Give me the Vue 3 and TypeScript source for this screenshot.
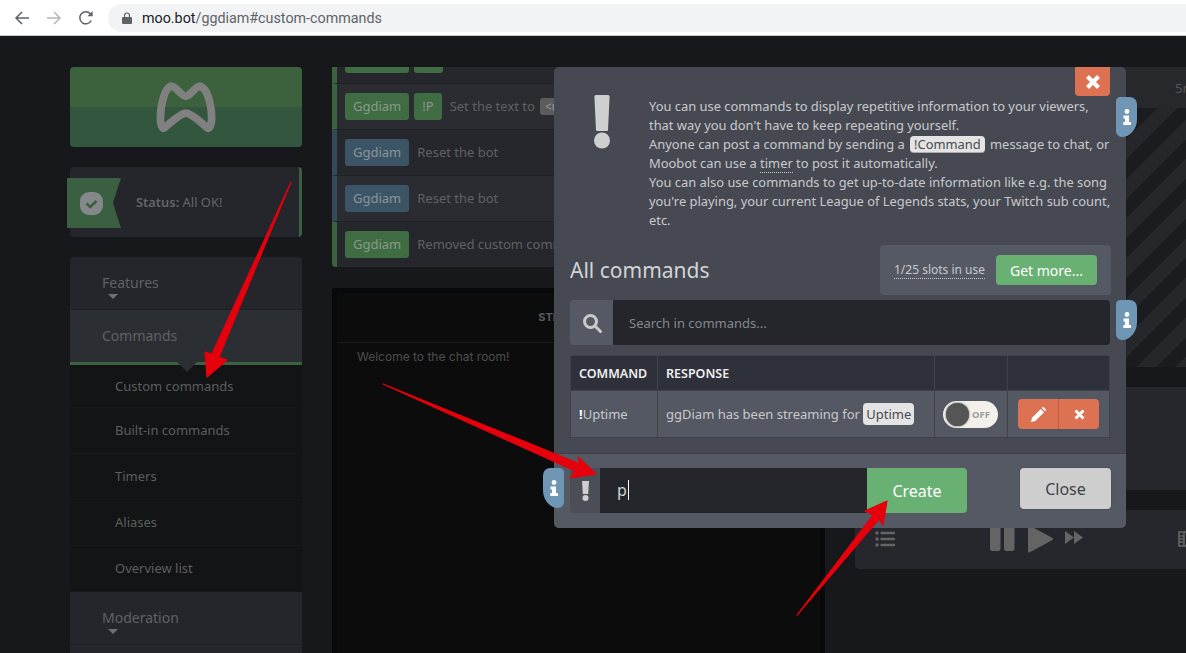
<template>
  <div class="app">
    <!-- Browser toolbar -->
    <header class="browser">
      <svg class="nav-icon back" width="16" height="16" viewBox="0 0 16 16" fill="none" stroke="#5f6368" stroke-width="1.5">
        <path d="M15 8H2M8 2 2 8l6 6" />
      </svg>
      <svg class="nav-icon forward" width="16" height="16" viewBox="0 0 16 16" fill="none" stroke="#b4b6b9" stroke-width="1.5">
        <path d="M1 8h13M8 2l6 6-6 6" />
      </svg>
      <svg class="nav-icon reload" width="16" height="16" viewBox="0 0 16 16" fill="none" stroke="#5f6368" stroke-width="1.5">
        <path d="M13.2 10.5A6 6 0 1 1 12.4 3.9L14 5.5" />
        <path d="M14.6 1v5.2H9.4" fill="#5f6368" stroke="none" />
      </svg>
      <div class="url-pill">
        <svg width="10" height="12" viewBox="0 0 10 12" fill="#5f6368">
          <path d="M1 5h8a1 1 0 0 1 1 1v5a1 1 0 0 1-1 1H1a1 1 0 0 1-1-1V6a1 1 0 0 1 1-1z" />
          <path d="M2.5 5V3.5a2.5 2.5 0 0 1 5 0V5" fill="none" stroke="#5f6368" stroke-width="1.2" />
        </svg>
        <span class="url"><b>moo.bot</b>/ggdiam#custom-commands</span>
      </div>
    </header>

    <div class="page">
      <!-- Left column -->
      <aside class="sidebar">
        <div class="logo">
          <svg width="62" height="54" viewBox="465 240 185 160" fill="none" stroke="#808080" stroke-width="23" stroke-linejoin="round">
            <path d="M481 355C481 310 495 264 512 258 525 256 545 288 557 288 570 288 587 256 600 258 620 264 634 310 634 355 634 370 628 386 622 383 610 373 575 338 557 338 540 338 505 373 492 383 486 386 481 370 481 355Z" />
          </svg>
        </div>
        <div class="status">
          <div class="ribbon">
            <svg width="23" height="23" viewBox="0 0 23 23">
              <rect width="23" height="23" rx="9" fill="#85888a" />
              <path d="M6.5 11.500l3.800 3.500 6.200-6" fill="none" stroke="#3a5f41" stroke-width="2.600" />
            </svg>
          </div>
          <span class="status-text"><b>Status:</b> All OK!</span>
        </div>
        <nav class="menu">
          <div class="menu-head">Features<i class="caret"></i></div>
          <div class="menu-head active">Commands</div>
          <div class="submenu">
            <div v-for="item in subItems" :key="item" class="sub-item">{{ item }}</div>
          </div>
          <div class="menu-head">Moderation<i class="caret"></i></div>
          <div class="menu-head"></div>
        </nav>
      </aside>

      <!-- Middle column -->
      <main class="middle">
        <section class="log">
          <div v-for="(row, i) in logRows" :key="i" class="log-row" :class="[row.kind, { clipped: i === 0 }]">
            <span class="badge">Ggdiam</span>
            <span v-if="row.cmd" class="badge">{{ row.cmd }}</span>
            <span class="log-text">{{ row.text }}</span>
            <span v-if="row.code" class="log-code">{{ row.code }}</span>
          </div>
        </section>
        <section class="chat">
          <div class="chat-head">STREAM CHAT</div>
          <div class="chat-body">Welcome to the chat room!</div>
        </section>
      </main>

      <!-- Right column -->
      <section class="right">
        <div class="right-top"><span>5m</span></div>
        <div class="stripes"></div>
        <div class="right-panel"></div>
        <div class="player">
          <svg class="p-list" width="20" height="16" viewBox="0 0 20 16" fill="#646464">
            <circle cx="2" cy="2" r="1.7" /><circle cx="2" cy="8" r="1.7" /><circle cx="2" cy="14" r="1.7" />
            <rect x="5.5" y="0.8" width="14.5" height="2.4" rx="0.6" /><rect x="5.5" y="6.8" width="14.5" height="2.4" rx="0.6" /><rect x="5.5" y="12.8" width="14.5" height="2.4" rx="0.6" />
          </svg>
          <svg class="p-pause" width="25" height="26" viewBox="0 0 25 26" fill="#646464">
            <rect width="10.5" height="26" rx="2.5" /><rect x="14" width="10.5" height="26" rx="2.5" />
          </svg>
          <svg class="p-play" width="25" height="28" viewBox="0 0 25 28" fill="#646464" stroke="#646464" stroke-width="2" stroke-linejoin="round">
            <path d="M1 1.5 24 14 1 26.5Z" />
          </svg>
          <svg class="p-ff" width="18" height="13" viewBox="0 0 18 13" fill="#646464">
            <path d="M0 0l9 6.5L0 13zM9 0l9 6.5L9 13z" />
          </svg>
          <svg class="p-film" width="16" height="16" viewBox="0 0 16 16" fill="none" stroke="#646464" stroke-width="1.6">
            <rect x="1" y="1" width="20" height="14" /><path d="M1 5h5M1 8h5M1 11h5M6 1v14" />
          </svg>
        </div>
      </section>
    </div>

    <!-- Commands dialog -->
    <div class="modal">
      <button class="modal-x" aria-label="Close">
        <svg width="16" height="16" viewBox="0 0 16 16"><path d="M2.5 2.5l11 11M13.500 2.500l-11 11" stroke="#fff" stroke-width="4.200" /></svg>
      </button>

      <div class="modal-body">
        <div class="intro">
          <svg class="bang" width="18" height="54" viewBox="0 0 18 54" fill="#cfcfcf">
            <path d="M3 0h12a1.6 1.6 0 0 1 1.6 1.6L15 35a1 1 0 0 1-1 1H4a1 1 0 0 1-1-1L1.400 1.600A1.600 1.600 0 0 1 3 0z" />
            <circle cx="9" cy="45.500" r="8" />
          </svg>
          <p class="intro-text">
            You can use commands to display repetitive information to your viewers,<br />
            that way you don't have to keep repeating yourself.<br />
            Anyone can post a command by sending a <span class="tag dotted">!Command</span> message to chat, or<br />
            Moobot can use a <span class="dotted-link">timer</span> to post it automatically.<br />
            You can also use commands to get up-to-date information like e.g. the song<br />
            you're playing, your current League of Legends stats, your Twitch sub count,<br />
            etc.
          </p>
        </div>

        <div class="title-row">
          <h2>All commands</h2>
          <div class="slots">
            <span class="slots-text">1/25 slots in use</span>
            <button class="get-more">Get more...</button>
          </div>
        </div>

        <div class="search">
          <div class="search-icon">
            <svg width="20" height="20" viewBox="0 0 20 20" fill="none" stroke="#c9cacc" stroke-width="3">
              <circle cx="8.500" cy="8.500" r="6" /><path d="M13 13l5.500 5.500" stroke-linecap="round" />
            </svg>
          </div>
          <input class="search-input" placeholder="Search in commands..." />
        </div>

        <table class="commands">
          <thead>
            <tr><th class="c1">COMMAND</th><th>RESPONSE</th><th class="c3"></th><th class="c4"></th></tr>
          </thead>
          <tbody>
            <tr>
              <td><b>!</b>Uptime</td>
              <td>ggDiam has been streaming for <span class="tag">Uptime</span></td>
              <td>
                <div class="toggle"><i class="knob"></i><span>OFF</span></div>
              </td>
              <td>
                <div class="row-actions">
                  <button>
                    <svg width="15" height="15" viewBox="0 0 15 15" fill="#fff">
                      <path d="M0 15l1-4.300L9.800 1.900l3.300 3.300L4.300 14zM10.800.900l.6-.6a1 1 0 0 1 1.400 0l1.900 1.900a1 1 0 0 1 0 1.400l-.6.6z" />
                    </svg>
                  </button>
                  <button>
                    <svg width="11" height="11" viewBox="0 0 11 11"><path d="M1.500 1.500l8 8M9.500 1.500l-8 8" stroke="#fff" stroke-width="2.800" /></svg>
                  </button>
                </div>
              </td>
            </tr>
          </tbody>
        </table>
      </div>

      <div class="modal-foot">
        <div class="new-command">
          <div class="new-bang">
            <svg width="9" height="20" viewBox="0 0 9 20" fill="#cfcfcf">
              <path d="M1 0h7l-.8 13H1.800z" /><circle cx="4.500" cy="17" r="3" />
            </svg>
          </div>
          <div class="new-input"><span class="typed">p</span></div>
          <button class="create">Create</button>
        </div>
        <button class="close-btn">Close</button>
      </div>

      <!-- Help tabs on the dialog edges -->
      <div v-for="tab in infoTabs" :key="tab.name" class="info-tab" :class="tab.name">
        <svg width="8" height="16" viewBox="0 0 8 16" fill="#fff">
          <circle cx="4" cy="2.500" r="2.400" />
          <path d="M.5 6.500h5.500v6.500H8V16H.3v-3H2V9.500H.5z" />
        </svg>
      </div>
    </div>

    <!-- Red annotation arrows -->
    <svg class="arrows" width="1186" height="653" viewBox="0 0 1186 653">
      <g fill="#e6000c" stroke="#e6000c" stroke-width="1.200" stroke-linejoin="round">
        <polygon points="291,182 219,357 227,360 207,377 205,352 212,354" />
        <polygon points="383,384 580,464 578,457 596,474 570,478 575,471" />
        <polygon points="797,615 873,515 865,511 887,501 883,525 879,519" />
      </g>
    </svg>
  </div>
</template>

<script setup lang="ts">
interface LogRow {
  kind: 'green' | 'blue'
  cmd?: string
  text: string
  code?: string
}

const subItems: string[] = ['Custom commands', 'Built-in commands', 'Timers', 'Aliases', 'Overview list']

const logRows: LogRow[] = [
  { kind: 'green', cmd: '!G', text: 'Changed the game' },
  { kind: 'green', cmd: '!P', text: 'Set the text to', code: '<uptime>' },
  { kind: 'blue', text: 'Reset the bot' },
  { kind: 'blue', text: 'Reset the bot' },
  { kind: 'green', text: 'Removed custom command' }
]

const infoTabs = [{ name: 'tab-top' }, { name: 'tab-search' }, { name: 'tab-new' }]
</script>

<style>
html,
body {
  margin: 0;
  overflow: hidden;
  background: #17181c;
}
</style>

<style scoped>
.app {
  position: relative;
  width: 1186px;
  height: 653px;
  overflow: hidden;
  background: #17181c;
  font-family: "Noto Sans", "Open Sans", sans-serif;
}

/* browser bar */
.browser {
  height: 35px;
  background: #fff;
  border-bottom: 1px solid #c9cacc;
  display: flex;
  align-items: center;
  padding-left: 14px;
  gap: 16px;
}

.url-pill {
  flex: 1;
  height: 28px;
  margin-left: -2px;
  padding-left: 14px;
  display: flex;
  align-items: center;
  gap: 10px;
  background: #f1f3f4;
  border-radius: 14px 0 0 14px;
}

.url {
  font-family: Roboto, "Liberation Sans", sans-serif;
  font-size: 14.3px;
  color: #5f6368;
}

.url b {
  font-weight: 400;
  color: #202124;
}

.page {
  display: flex;
  gap: 30px;
  padding: 31px 0 0 70px;
}

/* sidebar */
.sidebar {
  width: 232px;
  flex-shrink: 0;
}

.logo {
  height: 80px;
  border-radius: 4px;
  background: linear-gradient(#3c613d 0 50%, #33563f 50%);
  display: flex;
  align-items: center;
  justify-content: center;
}

.status {
  position: relative;
  height: 70px;
  margin-top: 20px;
  background: #24262b;
  border-right: 3px solid #3a5f41;
  border-radius: 4px;
  display: flex;
  align-items: center;
  box-sizing: border-box;
  padding-left: 66px;
}

.ribbon {
  position: absolute;
  left: -3px;
  top: 11px;
  width: 54px;
  height: 50px;
  background: #3a5f41;
  clip-path: polygon(0 0, 100% 0, 85% 50%, 100% 100%, 0 100%);
  display: flex;
  align-items: center;
  padding-left: 13px;
  box-sizing: border-box;
}

.status-text {
  font-size: 12.9px;
  color: #636569;
}

.status-text b {
  font-weight: 600;
}

.menu {
  margin-top: 20px;
  border-radius: 4px 4px 0 0;
  overflow: hidden;
  background: #24262b;
}

.menu-head {
  position: relative;
  height: 53px;
  box-sizing: border-box;
  padding: 17px 0 0 32px;
  font-size: 14px;
  line-height: 18px;
  color: #5f6166;
  border-bottom: 1px solid #1f2024;
}

.menu-head.active {
  height: 55px;
  background: #2b2e33;
  border-bottom: 3px solid #3b6340;
}

.menu-head.active::after {
  content: "";
  position: absolute;
  left: 107px;
  bottom: -10px;
  border: 10px solid transparent;
  border-bottom: 0;
  border-top-color: #2b2e33;
  z-index: 1;
}

.caret {
  position: absolute;
  left: 38px;
  top: 37px;
  border: 5px solid transparent;
  border-bottom: 0;
  border-top-color: #6c6e72;
}

.submenu {
  background: #131416;
}

.sub-item {
  height: 46px;
  box-sizing: border-box;
  padding: 13px 0 0 45px;
  font-size: 13px;
  line-height: 18px;
  color: #5d5e60;
  border-bottom: 1px solid #17181a;
}

.sub-item:first-child {
  height: 43px;
  padding-top: 12px;
}

/* middle column */
.middle {
  width: 493px;
  flex-shrink: 0;
}

.log {
  height: 200px;
  border-radius: 0 0 0 4px;
  overflow: hidden;
  background: #25272c;
}

.log-row {
  height: 46px;
  box-sizing: border-box;
  padding-left: 8px;
  display: flex;
  align-items: center;
  gap: 5px;
  overflow: hidden;
  border-left: 5px solid #3b6340;
  border-bottom: 1px solid #1f2125;
}

.log-row.clipped {
  height: 17px;
  align-items: flex-end;
  padding-bottom: 10px;
}

.log-row.clipped .log-text {
  margin-bottom: 7px;
}

.log-row:nth-child(even) {
  background: #2a2c31;
}

.log-row.blue {
  border-left-color: #334a5a;
}

.badge {
  flex-shrink: 0;
  height: 27px;
  padding: 0 8px;
  border-radius: 3px;
  background: #3f6c42;
  color: #8a9a8b;
  font-size: 13px;
  line-height: 27px;
}

.blue .badge {
  background: #3c5566;
  color: #8a949b;
}

.log-text {
  margin: 0 0 2px 3px;
  font-size: 13px;
  color: #5f6166;
  white-space: nowrap;
}

.log-code {
  margin-bottom: 1px;
  padding: 0 5px;
  border-radius: 3px;
  background: #5c5c5c;
  color: #9a9a9a;
  font-size: 12px;
  line-height: 17px;
}

.chat {
  height: 365px;
  margin-top: 21px;
  box-sizing: border-box;
  border: solid #08090a;
  border-width: 5px 5px 0;
  border-radius: 4px 4px 0 0;
  background: #0c0c0d;
}

.chat-head {
  height: 49px;
  border-bottom: 1px solid #1a1a1c;
  text-align: center;
  font-family: Inter, "Liberation Sans", sans-serif;
  font-size: 11px;
  font-weight: 700;
  line-height: 49px;
  color: #5c5c5e;
}

.chat-body {
  padding: 6px 20px;
  font-family: Inter, "Liberation Sans", sans-serif;
  font-size: 12px;
  color: #4c4c4e;
}

/* right column */
.right {
  width: 400px;
  flex-shrink: 0;
}

.right-top {
  height: 41px;
  box-sizing: border-box;
  padding: 12px 0 0 320px;
  background: #26282c;
  font-size: 13px;
  color: #55575b;
}

.stripes {
  height: 259px;
  background: repeating-linear-gradient(-45deg, #1b1c20 0 14px, #25272b 14px 28px);
}

.right-panel {
  height: 103px;
  margin-top: 20px;
  background: #25272c;
}

.player {
  position: relative;
  height: 59px;
  margin-top: 20px;
  border-radius: 4px;
  background: #25272c;
}

.player svg {
  position: absolute;
}

.p-list {
  left: 20px;
  top: 21px;
}

.p-pause {
  left: 135px;
  top: 15px;
}

.p-play {
  left: 173px;
  top: 15px;
}

.p-ff {
  left: 210px;
  top: 21px;
}

.p-film {
  left: 323px;
  top: 21px;
}

/* dialog */
.modal {
  position: absolute;
  left: 554px;
  top: 67px;
  width: 572px;
  height: 461px;
  display: flex;
  flex-direction: column;
  border-radius: 5px;
  background: #464952;
}

.modal-x {
  position: absolute;
  right: 16px;
  top: 0;
  width: 35px;
  height: 29px;
  padding: 0;
  border: 0;
  border-radius: 0 0 4px 4px;
  background: #dc7252;
  display: flex;
  align-items: center;
  justify-content: center;
}

.modal-body {
  flex: 1;
  padding: 0 16px;
}

.intro {
  display: flex;
  height: 178px;
}

.bang {
  margin: 28px 0 0 23px;
  flex-shrink: 0;
}

.intro-text {
  margin: 30px 0 0 38px;
  font-size: 12.9px;
  line-height: 19px;
  color: #c8c9cc;
  white-space: nowrap;
}

.tag {
  display: inline-block;
  padding: 0 4px;
  border-radius: 4px;
  background: #e3e3e3;
  color: #484a50;
  line-height: 17px;
}

.dotted {
  margin: 0 2px;
  box-shadow: inset 0 -1px 0 -0.5px #777;
}

.dotted-link {
  border-bottom: 1px dotted #c8c9cc;
}

.title-row {
  display: flex;
  align-items: center;
  justify-content: space-between;
  height: 50px;
}

.title-row h2 {
  margin: 0;
  font-size: 21px;
  font-weight: 400;
  color: #d2d3d5;
}

.slots {
  width: 231px;
  height: 50px;
  margin-right: -1px;
  box-sizing: border-box;
  padding: 0 14px;
  display: flex;
  align-items: center;
  justify-content: space-between;
  border-radius: 4px;
  background: #555963;
}

.slots-text {
  font-size: 12px;
  color: #c8c9cc;
  border-bottom: 1px dotted #c8c9cc;
}

.get-more {
  width: 101px;
  height: 30px;
  padding: 0;
  border: 0;
  border-radius: 4px;
  background: #69b173;
  color: #fff;
  font: 14px "Noto Sans", sans-serif;
}

.search {
  display: flex;
  height: 45px;
  margin-top: 5px;
}

.search-icon {
  width: 43px;
  flex-shrink: 0;
  border-radius: 4px 0 0 4px;
  background: #555963;
  display: flex;
  align-items: center;
  justify-content: center;
}

.search-input {
  flex: 1;
  min-width: 0;
  box-sizing: border-box;
  padding: 1px 16px 0;
  border: 0;
  border-radius: 0 4px 4px 0;
  outline: 0;
  background: #24262b;
  color: #c8c9cc;
  font: 13px "Noto Sans", sans-serif;
}

.search-input::placeholder {
  color: #85888e;
  opacity: 1;
}

.commands {
  width: 540px;
  margin-top: 10px;
  border-collapse: collapse;
  table-layout: fixed;
  font-size: 13px;
  color: #c8c9cc;
}

.commands th,
.commands td {
  border: 1px solid #3f424a;
  padding: 0 8px;
  text-align: left;
  white-space: nowrap;
}

.commands th {
  height: 34px;
  background: #2e313a;
  color: #eee;
  font-size: 12.5px;
  font-weight: 600;
}

.commands td {
  height: 46px;
  background: #545862;
}

.commands td b {
  color: #fff;
}

.commands .tag {
  padding: 0 3px;
  line-height: 22px;
}

.commands .c1 {
  width: 70px;
}

.commands .c3 {
  width: 56px;
}

.commands .c4 {
  width: 85px;
}

.toggle {
  position: relative;
  width: 55px;
  height: 27px;
  border-radius: 14px;
  background: #f3f0ec;
  font-size: 9.5px;
  font-weight: 700;
  line-height: 27px;
  text-align: right;
  color: #9b9b9b;
}

.toggle span {
  padding-right: 8px;
}

.knob {
  position: absolute;
  left: 3px;
  top: 2px;
  width: 23px;
  height: 23px;
  border-radius: 50%;
  background: #555;
  box-shadow: 0 0 2px #333;
}

.row-actions {
  display: flex;
  width: 81px;
  height: 30px;
  margin-left: 2px;
  border-radius: 4px;
  overflow: hidden;
}

.row-actions button {
  flex: 1;
  padding: 0;
  border: 0;
  background: #dc7252;
  display: flex;
  align-items: center;
  justify-content: center;
}

.row-actions button + button {
  border-left: 1px solid #b85f45;
}

.modal-foot {
  height: 75px;
  box-sizing: border-box;
  padding: 14px 15px 0 16px;
  display: flex;
  justify-content: space-between;
  align-items: flex-start;
  border-top: 1px solid #3f424a;
  border-radius: 0 0 5px 5px;
  background: #555963;
}

.new-command {
  display: flex;
  width: 397px;
  height: 45px;
}

.new-bang {
  width: 30px;
  flex-shrink: 0;
  border-radius: 4px 0 0 4px;
  background: #4b4e57;
  display: flex;
  align-items: center;
  justify-content: center;
}

.new-input {
  flex: 1;
  padding-left: 17px;
  background: #24262b;
  font-size: 16px;
  line-height: 45px;
  color: #d2d3d5;
}

.typed {
  display: inline-block;
  line-height: 20px;
  border-right: 1px solid #fff;
  padding-right: 1px;
}

.create {
  width: 100px;
  padding: 0;
  border: 0;
  border-radius: 0 4px 4px 0;
  background: #69b173;
  color: #fff;
  font: 16px "Noto Sans", sans-serif;
}

.close-btn {
  width: 91px;
  height: 41px;
  padding: 0;
  border: 0;
  border-radius: 4px;
  background: #cecece;
  color: #40424a;
  font: 16px "Noto Sans", sans-serif;
  box-shadow: 0 0 2px #3f424a;
}

.info-tab {
  position: absolute;
  width: 21px;
  height: 40px;
  display: flex;
  align-items: center;
  justify-content: center;
  background: #6f97b5;
  border-radius: 6px 10px 100% 8px / 6px 10px 62% 8px;
}

.tab-top {
  left: 562px;
  top: 30px;
}

.tab-search {
  left: 562px;
  top: 233px;
}

.tab-new {
  left: -11px;
  top: 401px;
  border-radius: 10px 6px 8px 100% / 10px 6px 8px 62%;
}

.arrows {
  position: absolute;
  left: 0;
  top: 0;
  pointer-events: none;
}
</style>
